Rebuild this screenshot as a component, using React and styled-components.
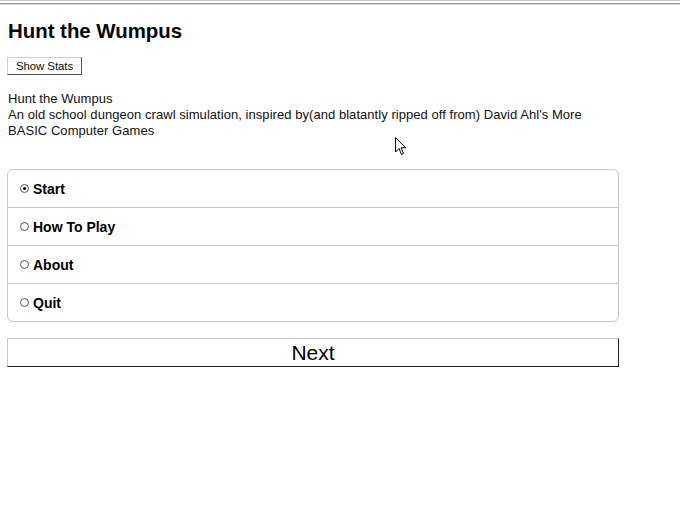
import React, { useState } from "react";
import styled, { createGlobalStyle } from "styled-components";

const Global = createGlobalStyle`
  html, body { margin: 0; padding: 0; background: #fff; }
  body { font-family: "Liberation Sans", Arial, sans-serif; color: #000; }
`;

const Page = styled.div`
  position: relative;
  width: 680px;
  min-height: 510px;
`;

const TopRule = styled.div`
  height: 1px;
  background: #c4c4c4;
  margin-bottom: 2px;
  &::after {
    content: "";
    display: block;
    position: relative;
    top: 3px;
    height: 2px;
    background: linear-gradient(#9a9a9a 50%, #d8d8d8 50%);
  }
`;

const Content = styled.div`
  padding: 0 61px 0 7px;
`;

const Title = styled.h1`
  font-size: 20.4px;
  font-weight: bold;
  margin: 19px 0 0 1px;
  line-height: 22px;
`;

const StatsButton = styled.button`
  margin-top: 15px;
  font-family: "Liberation Sans", Arial, sans-serif;
  font-size: 11.5px;
  height: 18px;
  width: 75px;
  padding: 0;
  background: #fff;
  border: 1px solid;
  border-color: #d0d0d0 #555 #555 #d0d0d0;
  color: #111;
  letter-spacing: -0.1px;
`;

const Description = styled.div`
  margin: 16px 0 0 1px;
  font-size: 13px;
  letter-spacing: 0.05px;
  line-height: 16px;
  color: #111;
`;

const Menu = styled.div`
  margin-top: 30px;
  border: 1px solid #c8c8c8;
  border-radius: 6px;
  overflow: hidden;
`;

const Row = styled.label`
  display: flex;
  align-items: center;
  height: 37px;
  padding-left: 12px;
  font-size: 14px;
  font-weight: bold;
  border-top: ${(p) => (p.$first ? "none" : "1px solid #c8c8c8")};
  cursor: pointer;
`;

const Radio = styled.span`
  width: 7px;
  height: 7px;
  border: 1px solid #555;
  border-radius: 50%;
  margin-right: 4px;
  display: flex;
  align-items: center;
  justify-content: center;
  &::after {
    content: "";
    width: 3px;
    height: 3px;
    border-radius: 50%;
    background: ${(p) => (p.$checked ? "#000" : "transparent")};
  }
`;

const NextButton = styled.button`
  display: block;
  margin-top: 16px;
  width: 100%;
  height: 29px;
  font-family: "Liberation Sans", Arial, sans-serif;
  font-size: 21px;
  background: #fff;
  border: 1px solid;
  border-color: #c8c8c8 #222 #222 #c8c8c8;
  padding: 0;
  color: #000;
`;

const Cursor = styled.svg`
  position: absolute;
  left: 395px;
  top: 137px;
`;

const items = ["Start", "How To Play", "About", "Quit"];

export default function App() {
  const [sel, setSel] = useState(0);
  return (
    <Page>
      <Global />
      <TopRule />
      <Content>
        <Title>Hunt the Wumpus</Title>
        <StatsButton>Show Stats</StatsButton>
        <Description>
          Hunt the Wumpus
          <br />
          An old school dungeon crawl simulation, inspired by(and blatantly
          ripped off from) David Ahl's More BASIC Computer Games
        </Description>
        <Menu>
          {items.map((it, i) => (
            <Row key={it} $first={i === 0} onClick={() => setSel(i)}>
              <Radio $checked={sel === i} />
              {it}
            </Row>
          ))}
        </Menu>
        <NextButton>Next</NextButton>
      </Content>
      <Cursor width="12" height="19" viewBox="0 0 12 19">
        <path
          d="M0.5 0.5 L0.5 15 L4 11.5 L6.5 17.5 L8.5 16.5 L6 10.8 L10.8 10.8 Z"
          fill="#fff"
          stroke="#000"
          strokeWidth="1"
          strokeLinejoin="miter"
        />
      </Cursor>
    </Page>
  );
}
